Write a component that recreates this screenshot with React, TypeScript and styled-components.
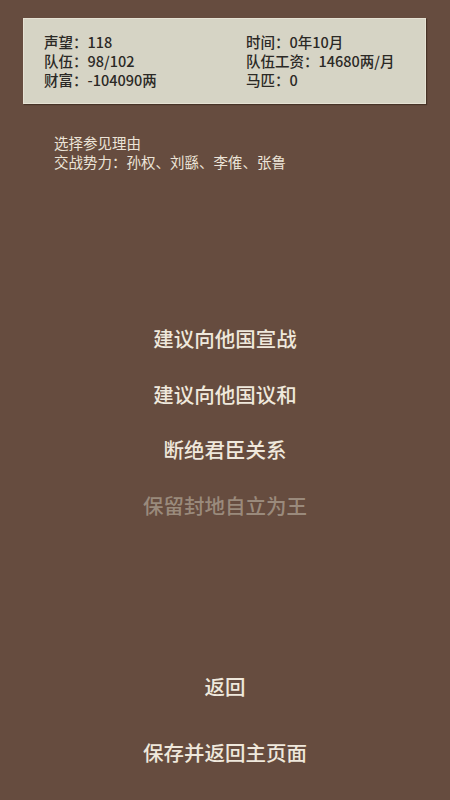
import React from "react";
import styled, { createGlobalStyle } from "styled-components";

const Global = createGlobalStyle`
  html, body { margin: 0; padding: 0; background: #664c3f; }
  body { font-family: "Noto Sans CJK SC", "Noto Sans", sans-serif; }
`;

const Page = styled.div`
  width: 450px;
  height: 800px;
  background: #664c3f;
  display: flex;
  flex-direction: column;
  box-sizing: border-box;
  padding-top: 18px;
`;

const Panel = styled.div`
  margin: 0 24px 0 23px;
  height: 86px;
  box-sizing: border-box;
  background: #d6d4c5;
  border: 1px solid #e6e2d4;
  box-shadow: 1px 1px 1px rgba(40, 25, 15, 0.5);
  display: grid;
  grid-template-columns: 202px 1fr;
  padding: 13px 0 0 20px;
  align-content: start;
`;

const Stat = styled.div`
  font-size: 14.5px;
  line-height: 19px;
  color: #2b2925;
  white-space: nowrap;
  font-weight: 500;
`;

const Info = styled.div`
  margin: 29px 0 0 54px;
  color: #ece4d8;
  font-size: 14.5px;
  line-height: 19px;
`;

const Menu = styled.div`
  display: flex;
  flex-direction: column;
  align-items: center;
  margin-top: 150px;
  gap: 21.5px;
`;

const Item = styled.div<{ $disabled?: boolean }>`
  font-size: 20.5px;
  line-height: 34px;
  font-weight: 500;
  color: ${(p) => (p.$disabled ? "#9a8a7c" : "#efe8dc")};
`;

const Bottom = styled.div`
  display: flex;
  flex-direction: column;
  align-items: center;
  margin-top: auto;
  margin-bottom: 31px;
  gap: 32px;
`;

export default function App() {
  return (
    <>
      <Global />
      <Page>
        <Panel>
          <Stat>声望：118</Stat>
          <Stat>时间：0年10月</Stat>
          <Stat>队伍：98/102</Stat>
          <Stat>队伍工资：14680两/月</Stat>
          <Stat>财富：-104090两</Stat>
          <Stat>马匹：0</Stat>
        </Panel>
        <Info>
          <div>选择参见理由</div>
          <div>交战势力：孙权、刘繇、李傕、张鲁</div>
        </Info>
        <Menu>
          <Item>建议向他国宣战</Item>
          <Item>建议向他国议和</Item>
          <Item>断绝君臣关系</Item>
          <Item $disabled>保留封地自立为王</Item>
        </Menu>
        <Bottom>
          <Item>返回</Item>
          <Item>保存并返回主页面</Item>
        </Bottom>
      </Page>
    </>
  );
}
